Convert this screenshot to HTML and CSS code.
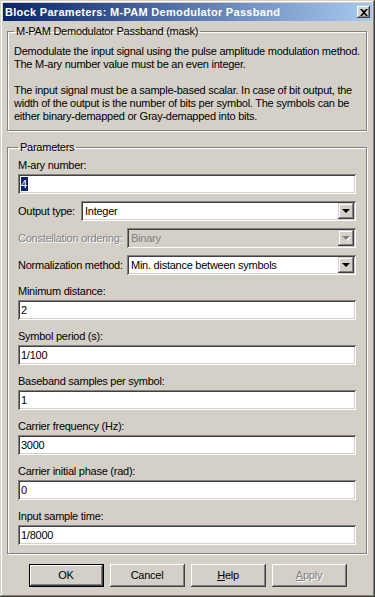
FILE: index.html
```html
<!DOCTYPE html>
<html>
<head>
<meta charset="utf-8">
<title>Block Parameters: M-PAM Demodulator Passband</title>
<link rel="stylesheet" href="styles.css">
</head>
<body>
<div class="window">
  <div class="titlebar">
    <span class="title">Block Parameters: M-PAM Demodulator Passband</span>
    <span class="close"><svg width="8" height="7" viewBox="0 0 8 7"><path d="M0 0h2l2 2 2-2h2L5 3.5 8 7H6L4 5 2 7H0l3-3.5z" fill="#000"/></svg></span>
  </div>
  <div class="content">
    <fieldset class="group desc">
      <legend>M-PAM Demodulator Passband (mask)</legend>
      <p class="nowrap">Demodulate the input signal using the pulse amplitude modulation method.<br>The M-ary number value must be an even integer.</p>
      <p>The input signal must be a sample-based scalar. In case of bit output, the width of the output is the number of bits per symbol. The symbols can be either binary-demapped or Gray-demapped into bits.</p>
    </fieldset>
    <fieldset class="group params">
      <legend>Parameters</legend>
      <div class="field first">
        <div class="lbl">M-ary number:</div>
        <div class="edit"><span class="sel">4</span></div>
      </div>
      <div class="combo-row">
        <div class="lbl w-short">Output type:</div>
        <div class="combo"><span class="val">Integer</span><span class="drop"><i class="arrow"></i></span></div>
      </div>
      <div class="combo-row">
        <div class="lbl w-long disabled">Constellation ordering:</div>
        <div class="combo off"><span class="val">Binary</span><span class="drop"><i class="arrow"></i></span></div>
      </div>
      <div class="combo-row">
        <div class="lbl w-long">Normalization method:</div>
        <div class="combo"><span class="val">Min. distance between symbols</span><span class="drop"><i class="arrow"></i></span></div>
      </div>
      <div class="field">
        <div class="lbl">Minimum distance:</div>
        <div class="edit">2</div>
      </div>
      <div class="field">
        <div class="lbl">Symbol period (s):</div>
        <div class="edit">1/100</div>
      </div>
      <div class="field">
        <div class="lbl">Baseband samples per symbol:</div>
        <div class="edit">1</div>
      </div>
      <div class="field">
        <div class="lbl">Carrier frequency (Hz):</div>
        <div class="edit">3000</div>
      </div>
      <div class="field">
        <div class="lbl">Carrier initial phase (rad):</div>
        <div class="edit">0</div>
      </div>
      <div class="field">
        <div class="lbl">Input sample time:</div>
        <div class="edit">1/8000</div>
      </div>
    </fieldset>
    <div class="buttons">
      <div class="btn default">OK</div>
      <div class="btn">Cancel</div>
      <div class="btn"><u>H</u>elp</div>
      <div class="btn off"><u>A</u>pply</div>
    </div>
  </div>
</div>
</body>
</html>
```
FILE: styles.css
```css
* { box-sizing: border-box; }
html, body { margin: 0; padding: 0; background: #d4d0c8; }
body {
  font-family: "Liberation Sans", Arial, sans-serif;
  font-size: 11px;
  line-height: 13px;
  color: #000;
  letter-spacing: -0.25px;
}
.window {
  width: 375px;
  height: 597px;
  padding: 3px;
  background: #d4d0c8;
  box-shadow: inset -1px -1px #404040, inset 1px 1px #d4d0c8, inset -2px -2px #808080, inset 2px 2px #fff;
  display: flex;
  flex-direction: column;
}
.titlebar {
  height: 18px;
  flex: none;
  display: flex;
  align-items: center;
  justify-content: space-between;
  padding: 0 2px 0 2px;
  background: linear-gradient(to right, #0a246a, #a6caf0);
}
.title {
  color: #fff;
  font-weight: bold;
  letter-spacing: 0.3px;
}
.close {
  width: 13px;
  height: 12px;
  background: #d4d0c8;
  box-shadow: inset -1px -1px #404040, inset 1px 1px #fff, inset -2px -2px #808080;
  display: flex;
  align-items: center;
  justify-content: center;
}
.close svg { display: block; }
.content {
  flex: 1;
  display: flex;
  flex-direction: column;
  padding: 4px 5px 0 4px;
}
.group {
  margin: 0;
  border: 1px solid #808080;
  box-shadow: 1px 1px 0 #fff, inset 1px 1px 0 #fff;
  min-width: 0;
}
.group legend {
  padding: 0 2px;
  line-height: 13px;
}
.desc {
  padding: 7px 4px 7px 6px;
}
.desc p { margin: 0; }
.desc p + p { margin-top: 13px; }
.nowrap { white-space: nowrap; }
.params {
  margin-top: 10px;
  padding: 5px 10px 8px 10px;
}
.lbl { line-height: 13px; white-space: nowrap; }
.field { margin-top: 10px; }
.field.first { margin-top: 0; }
.field .lbl { margin-bottom: 2px; }
.edit {
  height: 20px;
  background: #fff;
  box-shadow: inset 1px 1px #808080, inset -1px -1px #fff, inset 2px 2px #404040, inset -2px -2px #d4d0c8;
  padding: 3px 3px 0 3px;
  line-height: 14px;
}
.sel {
  background: #0a246a;
  color: #fff;
  display: inline-block;
  padding: 0 1px 0 0;
}
.combo-row {
  display: flex;
  align-items: center;
  margin-top: 7px;
  height: 20px;
}
.w-short { width: 63px; }
.w-long { width: 109px; }
.disabled { color: #808080; text-shadow: 1px 1px 0 #fff; }
.combo {
  flex: 1;
  height: 20px;
  background: #fff;
  box-shadow: inset 1px 1px #808080, inset -1px -1px #fff, inset 2px 2px #404040, inset -2px -2px #d4d0c8;
  padding: 2px;
  display: flex;
  align-items: center;
}
.combo .val { flex: 1; padding-left: 2px; line-height: 14px; }
.combo.off { background: #d4d0c8; }
.combo.off .val { color: #808080; }
.drop {
  width: 16px;
  height: 16px;
  background: #d4d0c8;
  box-shadow: inset -1px -1px #404040, inset 1px 1px #d4d0c8, inset -2px -2px #808080, inset 2px 2px #fff;
  display: flex;
  align-items: center;
  justify-content: center;
}
.arrow {
  display: block;
  width: 0;
  height: 0;
  border-left: 4px solid transparent;
  border-right: 4px solid transparent;
  border-top: 4px solid #000;
  margin-left: -1px;
}
.combo.off .arrow {
  border-top-color: #808080;
  filter: drop-shadow(1px 1px 0 #fff);
}
.buttons {
  margin-top: 10px;
  display: flex;
  justify-content: center;
  gap: 6px;
  padding-left: 1px;
}
.btn {
  width: 75px;
  height: 23px;
  display: flex;
  align-items: center;
  justify-content: center;
  background: #d4d0c8;
  box-shadow: inset -1px -1px #404040, inset 1px 1px #fff, inset -2px -2px #808080, inset 2px 2px #d4d0c8;
}
.btn.default {
  box-shadow: inset 0 0 0 1px #000, inset -2px -2px #404040, inset 2px 2px #fff, inset -3px -3px #808080;
}
.btn.off { color: #808080; text-shadow: 1px 1px 0 #fff; }
.btn u { text-decoration: underline; text-underline-offset: 1px; }
```
